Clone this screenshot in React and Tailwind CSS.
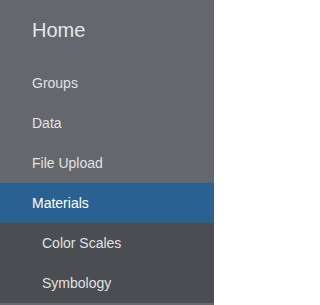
export default function App() {
  const items = ["Groups", "Data", "File Upload"];
  return (
    <div className="w-[214px] h-[305px] bg-[#64676e] overflow-hidden" style={{ fontFamily: '"Liberation Sans", Arial, sans-serif' }}>
      <div className="h-[63px] pl-8 pb-1 flex items-center text-[20px] text-[#e6e6e6]">Home</div>
      <ul>
        {items.map((t) => (
          <li key={t} className="h-10 pl-8 flex items-center text-[14px] text-[#e2e2e2]">{t}</li>
        ))}
        <li className="h-10 pl-8 flex items-center text-[14px] text-white bg-[#2a6192]">Materials</li>
        <li className="bg-[#4a4e53]">
          <ul>
            <li className="h-10 pl-[42px] flex items-center text-[14px] text-[#e2e2e2]">Color Scales</li>
            <li className="h-10 pl-[42px] flex items-center text-[14px] text-[#e2e2e2]">Symbology</li>
          </ul>
        </li>
      </ul>
    </div>
  );
}
